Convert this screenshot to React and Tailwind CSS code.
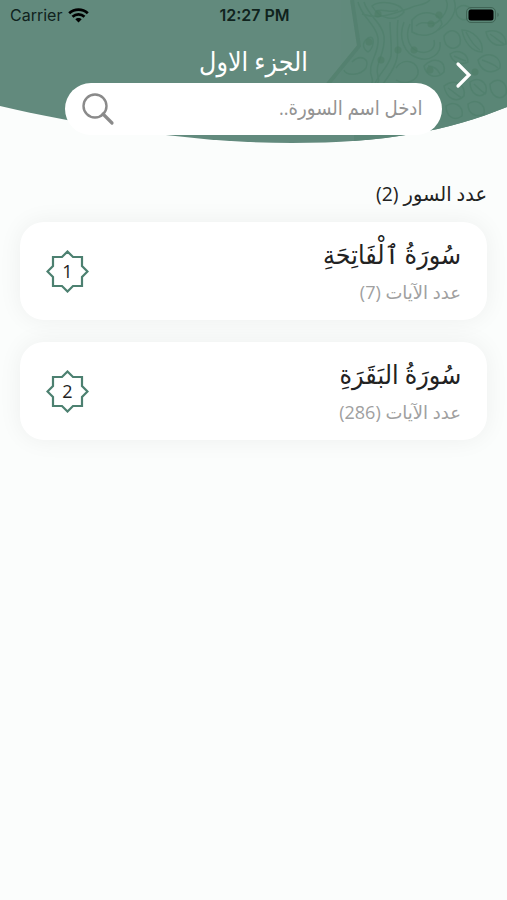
const surahs = [
  { id: 1, name: "سُورَةُ ٱلْفَاتِحَةِ", verses: 7 },
  { id: 2, name: "سُورَةُ البَقَرَةِ", verses: 286 },
];

const stems = [
  "M358 2C362 18 376 24 378 38C380 54 366 64 372 78C374 84 370 86 366 88",
  "M364 2C368 16 382 22 384 36C386 54 374 64 378 76C380 82 376 86 372 88",
  "M390 22C390 34 392 44 391 56C388 68 378 74 374 86",
  "M398 20C396 34 399 46 397 58C394 72 386 78 382 86",
  "M362 14C380 20 392 14 410 8C418 4 424 6 430 0",
  "M404 22C398 38 404 54 418 58C430 62 442 54 440 42",
  "M410 24C404 38 410 50 420 52C430 54 436 48 434 40",
  "M432 26C444 18 450 8 446 0M438 30C452 22 458 10 454 0",
];

const leaves = [
  "M372 6C380 0 400 2 404 12C396 22 380 20 372 6Z",
  "M376 11C384 8 390 14 398 10",
  "M368 38C376 34 374 48 368 52C362 48 362 42 368 38Z",
  "M352 62C360 54 370 58 366 68C360 76 346 76 344 70",
  "M412 20C422 8 440 12 442 24C436 36 422 38 412 32Z",
  "M416 26C424 18 432 28 440 20",
  "M396 68C404 56 420 62 418 74C414 84 402 84 396 80",
  "M456 10C462 2 474 6 472 16C464 24 456 18 456 10Z",
  "M444 36C452 26 462 32 460 44C454 52 444 48 444 36Z",
  "M462 30C472 30 484 40 482 52C472 52 464 42 462 30Z",
  "M450 54C458 48 468 54 468 62C460 66 452 62 450 54Z",
  "M466 32C470 40 474 46 480 50M454 56C458 58 462 60 466 61",
  "M424 66C434 56 446 60 444 72C436 80 426 76 424 66Z",
  "M428 66C434 66 438 70 440 74",
  "M486 32C496 28 506 34 506 44C496 48 488 42 486 32Z",
  "M478 60C488 50 502 56 500 68C490 76 480 70 478 60Z",
  "M482 60C488 62 494 64 498 68M490 34C496 38 500 42 504 44",
  "M444 86C454 78 466 84 464 96C456 104 446 98 444 86Z",
  "M470 82C478 76 488 82 486 92C480 100 470 94 470 82Z",
  "M490 84C498 76 508 82 506 94C500 102 490 96 490 84Z",
  "M446 106C454 100 464 106 462 116C454 122 446 116 446 106Z",
  "M468 104C476 98 486 104 484 114C476 118 468 114 468 104Z",
  "M448 88C454 92 458 96 462 98M474 84C478 88 482 92 486 94",
];

const dots = [
  [378, 14], [369, 42], [398, 50], [431, 24], [439, 15], [414, 50], [381, 60], [430, 70], [475, 72],
];

function Header() {
  return (
    <header className="relative h-[144px] font-['Open_Sans','DejaVu_Sans',sans-serif]">
      <svg className="absolute inset-0" width="507" height="144" viewBox="0 0 507 144" fill="none">
        <defs>
          <clipPath id="curve">
            <path d="M0 0H507V107C448 131 385 143 292 143C195 143 85 126 0 106Z" />
          </clipPath>
        </defs>
        <g clipPath="url(#curve)">
          <path d="M0 0H507V144H0Z" fill="#628a7d" />
          <path d="M352 0H507V144H354V84H328L359 46Z" fill="#5b8677" />
          <path d="M352 0L359 46L328 84" stroke="#558270" strokeWidth="4" />
          <g stroke="#4f7e6b" strokeWidth="1.5" opacity=".65">
            {stems.map((d) => (
              <path key={d} d={d} />
            ))}
            {leaves.map((d) => (
              <path key={d} d={d} />
            ))}
          </g>
          {dots.map(([x, y]) => (
            <circle key={x} cx={x} cy={y} r="3.5" fill="#4c7d66" opacity=".6" />
          ))}
        </g>
      </svg>
      <div className="relative flex h-[30px] items-center justify-between pr-[8px] pl-[10px] font-['Inter',sans-serif] text-[#10231d]">
        <span className="flex w-[200px] items-center gap-[6px] text-[16px]">
          Carrier
          <svg width="21" height="15" viewBox="0 0 21 15" fill="none" stroke="#000" strokeWidth="2.8">
            <path d="M1.2 5.3C6.5.4 14.5.4 19.8 5.3M4.5 8.7C8 5.6 13 5.6 16.5 8.7" />
            <path d="M10.5 14.5L7.3 11.3C9 9.6 12 9.6 13.7 11.3Z" fill="#000" stroke="none" />
          </svg>
        </span>
        <span className="text-[16px] font-semibold">12:27 PM</span>
        <span className="flex w-[200px] justify-end">
          <svg width="33" height="16" viewBox="0 0 33 16" fill="none">
            <rect x=".5" y=".5" width="29" height="15" rx="4.5" stroke="#406556" />
            <rect x="2.5" y="2.5" width="25" height="11" rx="2.5" fill="#000" />
            <path d="M31.500 5.500C33 6.500 33 9 31.500 10Z" fill="#406556" />
          </svg>
        </span>
      </div>
      <div className="relative flex h-[53px] items-center justify-center pt-[10px]">
        <h1 dir="rtl" className="scale-x-[0.9] text-[26.5px] leading-none whitespace-nowrap text-white">
          الجزء الاول
        </h1>
        <button type="button" aria-label="Back" className="absolute top-[31px] left-[454px]">
          <svg width="18" height="28" viewBox="0 0 18 28" fill="none" stroke="#fff" strokeWidth="3.2" strokeLinecap="round">
            <path d="M4 3L15 14L4 25" />
          </svg>
        </button>
      </div>
      <div className="relative ml-[65px] flex h-[52px] w-[377px] items-center justify-between rounded-full bg-white pr-[20px] pl-[16px]">
        <svg width="34" height="34" viewBox="0 0 34 34" fill="none" stroke="#8a8a8a">
          <circle cx="14" cy="14" r="11.5" strokeWidth="2.4" />
          <path d="M22 22L31 31" strokeWidth="3.2" strokeLinecap="round" />
        </svg>
        <span dir="rtl" className="mb-[3px] origin-right scale-x-[0.905] text-[20px] whitespace-nowrap text-[#939393]">
          ادخل اسم السورة..
        </span>
      </div>
    </header>
  );
}

function SurahCard({ surah }) {
  return (
    <article className="flex h-[98px] items-center justify-between rounded-[24px] bg-white px-[26px] shadow-[0_0_24px_rgba(0,0,0,0.06)]">
      <div className="relative flex size-[43px] items-center justify-center text-[18px] text-[#222]">
        <svg className="absolute inset-0" width="43" height="43" viewBox="0 0 43 43" fill="none" stroke="#4c8070" strokeWidth="2.2">
          <path d="M21.5 1.5L27 7H36V16L41.5 21.5L36 27V36H27L21.5 41.5L16 36H7V27L1.5 21.5L7 16V7H16Z" />
        </svg>
        <span className="relative">{surah.id}</span>
      </div>
      <div dir="rtl" className="flex flex-col gap-[9px] whitespace-nowrap">
        <h2 className="-mt-[2px] origin-right scale-x-[0.92] text-[26px] leading-[34px] text-[#222]">{surah.name}</h2>
        <p className="text-[18px] leading-[24px] text-[#a0a0a0]">عدد الآيات ({surah.verses})</p>
      </div>
    </article>
  );
}

export default function App() {
  return (
    <main className="h-[900px] w-[507px] overflow-hidden bg-[#fbfdfc] font-['Open_Sans','DejaVu_Sans',sans-serif]">
      <Header />
      <section className="px-5 pt-[36px]">
        <p dir="rtl" className="mb-[14px] h-[28px] origin-right scale-x-[0.97] text-[20px] leading-[28px] whitespace-nowrap text-[#222]">
          عدد السور (2)
        </p>
        <div className="flex flex-col gap-[22px]">
          {surahs.map((surah) => (
            <SurahCard key={surah.id} surah={surah} />
          ))}
        </div>
      </section>
    </main>
  );
}
